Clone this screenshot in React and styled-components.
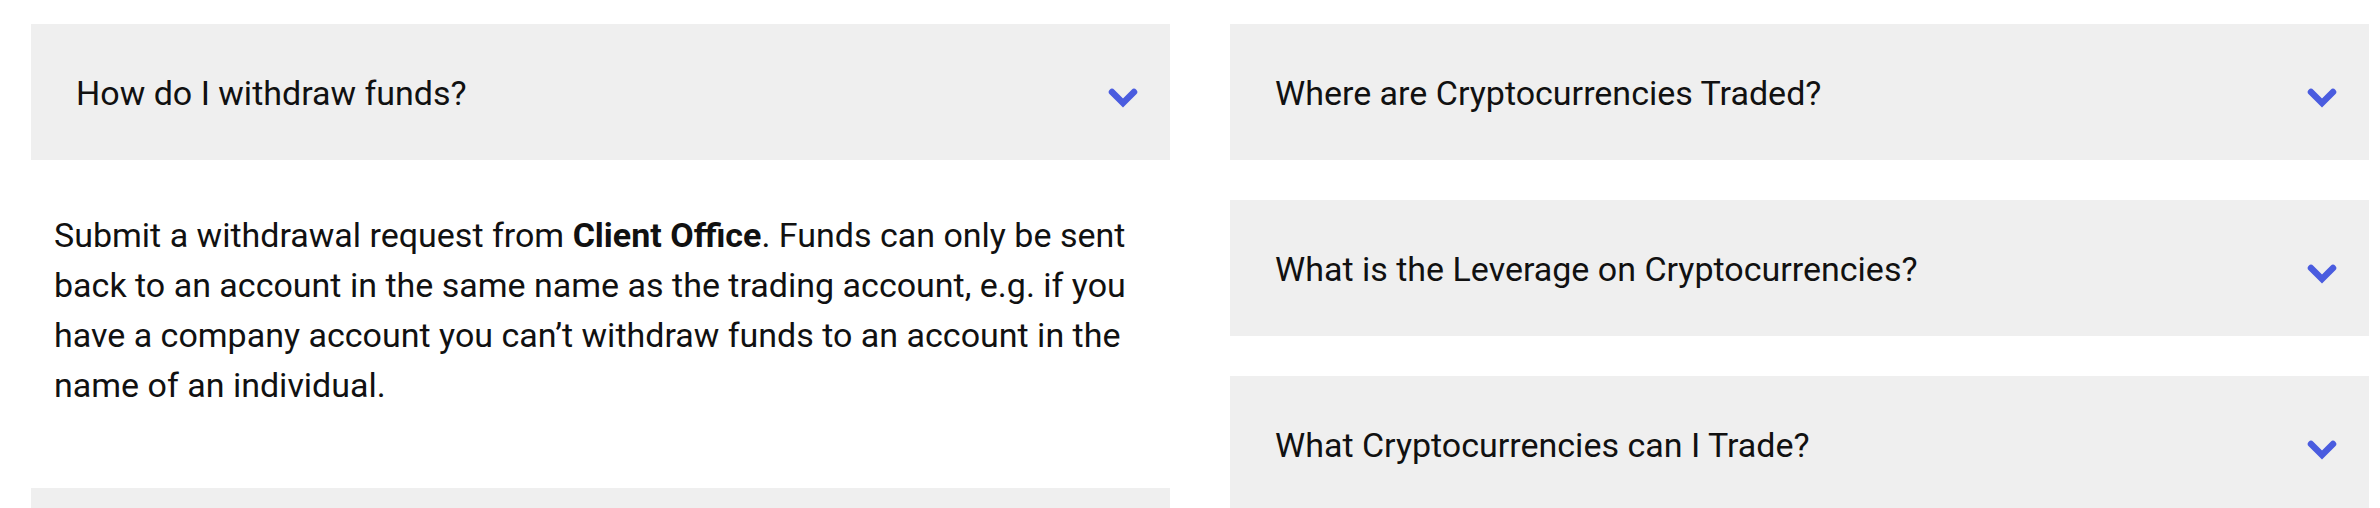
import styled, { createGlobalStyle } from "styled-components";

const GlobalStyle = createGlobalStyle`
    html, body {
        margin: 0;
        padding: 0;
        background: #ffffff;
    }
    body {
        font-family: Roboto, "Liberation Sans", Arial, sans-serif;
        color: #111111;
        overflow: hidden;
    }
`

const FaqSection = styled.section`
    display: grid;
    grid-template-columns: 1139px 1139px;
    column-gap: 60px;
    align-items: start;
    padding: 24px 11px 0 31px;
`

const FaqColumn = styled.div`
    display: flex;
    flex-direction: column;
    gap: 40px;
`

const FaqItem = styled.div`
    display: flex;
    flex-direction: column;
`

const FaqHeader = styled.button`
    align-items: center;
    background: #efefef;
    border: none;
    box-sizing: border-box;
    color: #111111;
    cursor: pointer;
    display: flex;
    font-family: inherit;
    font-size: 34px;
    font-weight: 400;
    height: 136px;
    justify-content: space-between;
    padding: 0 32px 0 45px;
    text-align: left;
    width: 100%;
`

const FaqTitle = styled.span`
    line-height: 1.2;
    margin-top: 2px;
`

const Chevron = styled.svg`
    flex-shrink: 0;
    margin-top: 11px;
`

const FaqAnswer = styled.div`
    padding: 50px 23px 38px 23px;

    p {
        font-size: 34px;
        line-height: 50px;
        margin: 0;
    }

    strong {
        font-weight: 700;
    }
`

function ChevronIcon() {
    return (
        <Chevron width="30" height="20" viewBox="0 0 30 20">
            <polyline
                points="4,4 15,15 26,4"
                fill="none"
                stroke="#4a5cdf"
                strokeWidth="6.5"
                strokeLinecap="round"
                strokeLinejoin="miter"
            />
        </Chevron>
    )
}

function Question({ title, open, children }) {
    return (
        <FaqItem>
            <FaqHeader type="button" aria-expanded={open}>
                <FaqTitle>{title}</FaqTitle>
                <ChevronIcon />
            </FaqHeader>
            {open && <FaqAnswer>{children}</FaqAnswer>}
        </FaqItem>
    )
}

const leftQuestions = [
    { title: "How do I withdraw funds?", open: true },
    { title: "How long do withdrawals take?" },
]

const rightQuestions = [
    { title: "Where are Cryptocurrencies Traded?" },
    { title: "What is the Leverage on Cryptocurrencies?" },
    { title: "What Cryptocurrencies can I Trade?" },
]

function App() {
    return (
        <>
            <GlobalStyle />
            <FaqSection>
                <FaqColumn>
                    {leftQuestions.map((q) => (
                        <Question key={q.title} title={q.title} open={q.open}>
                            <p>
                                Submit a withdrawal request from <strong>Client Office</strong>. Funds can only be sent
                                back to an account in the same name as the trading account, e.g. if you have a company
                                account you can’t withdraw funds to an account in the name of an individual.
                            </p>
                        </Question>
                    ))}
                </FaqColumn>
                <FaqColumn>
                    {rightQuestions.map((q) => (
                        <Question key={q.title} title={q.title} />
                    ))}
                </FaqColumn>
            </FaqSection>
        </>
    )
}

export default App
